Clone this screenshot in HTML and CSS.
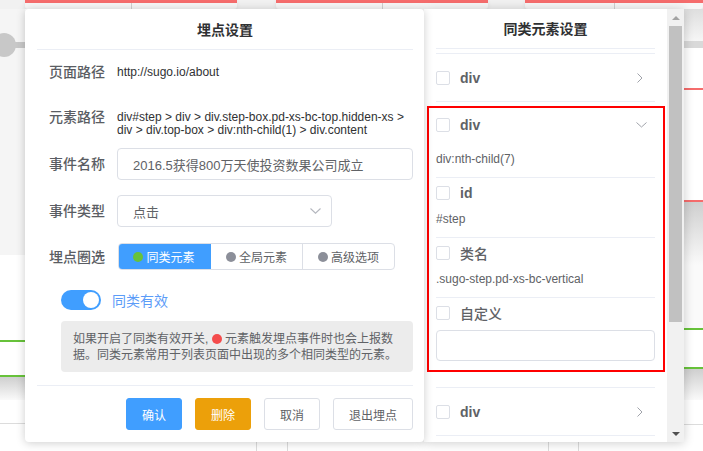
FILE: index.html
```html
<!DOCTYPE html>
<html lang="zh">
<head>
<meta charset="utf-8">
<title>埋点设置</title>
<link rel="stylesheet" href="styles.css">
</head>
<body>
<div class="page">
  <div class="bg">
    <div class="bg-top">
      <div class="card c1"><i class="conn"></i></div>
      <div class="card c2"><i class="conn"></i></div>
      <div class="card c3"><i class="conn"></i></div>
    </div>
    <div class="bg-mid">
      <div class="strip-left">
        <div class="sl-gray"><div class="node"><span class="node-dot"></span><span class="node-line"></span></div></div>
        <div class="sp h85"></div>
        <div class="green"></div>
        <div class="sp h33"></div>
        <div class="green"></div>
        <div class="shade h23"></div>
        <div class="sp h23"></div>
        <div class="gline"></div>
      </div>
      <div class="bg-center"></div>
      <div class="strip-right">
        <div class="shade-top"></div>
        <div class="band"></div>
        <div class="sp h40"></div>
        <div class="red"></div>
        <div class="sp h110"></div>
        <div class="red"></div>
        <div class="shade h63"></div>
        <div class="sp h63 faint"></div>
        <div class="green"></div>
        <div class="sp h37"></div>
        <div class="green"></div>
        <div class="shade h31"></div>
        <div class="sp h24"></div>
        <div class="gline"></div>
      </div>
    </div>
    <div class="bg-bottom">
      <i class="vl v1"></i><i class="vl v2"></i><i class="vl v3"></i><i class="vl v4"></i>
    </div>
  </div>

  <div class="modal">
    <section class="panel-left">
      <div class="panel-title">埋点设置</div>

      <div class="form-row r1">
        <span class="label">页面路径</span>
        <span class="value">http://sugo.io/about</span>
      </div>

      <div class="form-row r2">
        <span class="label">元素路径</span>
        <span class="value path">div#step &gt; div &gt; div.step-box.pd-xs-bc-top.hidden-xs &gt;<br>div &gt; div.top-box &gt; div:nth-child(1) &gt; div.content</span>
      </div>

      <div class="form-row r3">
        <span class="label">事件名称</span>
        <div class="input wide">2016.5获得800万天使投资数果公司成立</div>
      </div>

      <div class="form-row r4">
        <span class="label">事件类型</span>
        <div class="input select">
          <span>点击</span>
          <svg class="sel-arrow" width="11" height="6" viewBox="0 0 11 6"><polyline points="0.5,0.5 5.5,5.2 10.5,0.5" fill="none" stroke="#b4b7be" stroke-width="1.1"/></svg>
        </div>
      </div>

      <div class="form-row r5">
        <span class="label">埋点圈选</span>
        <div class="seg-group">
          <div class="seg active"><i class="dot green-dot"></i>同类元素</div>
          <div class="seg"><i class="dot gray-dot"></i>全局元素</div>
          <div class="seg last"><i class="dot gray-dot"></i>高级选项</div>
        </div>
      </div>

      <div class="switch-row">
        <span class="switch"><span class="knob"></span></span>
        <span class="switch-label">同类有效</span>
      </div>

      <div class="info">如果开启了同类有效开关, <i class="red-dot"></i> 元素触发埋点事件时也会上报数<br>据。同类元素常用于列表页面中出现的多个相同类型的元素。</div>

      <div class="footer">
        <button class="btn primary">确认</button>
        <button class="btn warning">删除</button>
        <button class="btn plain">取消</button>
        <button class="btn plain wide-btn">退出埋点</button>
      </div>
    </section>

    <section class="panel-right">
      <div class="rp-content">
        <div class="rp-title">同类元素设置</div>
        <div class="rp-spacer"></div>
        <div class="item">
          <span class="cb"></span><span class="name">div</span>
          <svg class="chev-r" width="6" height="10" viewBox="0 0 6 10"><polyline points="0.5,0.5 5,5 0.5,9.5" fill="none" stroke="#a0a3aa" stroke-width="1"/></svg>
        </div>

        <div class="hl-box">
          <div class="sec first">
            <div class="sec-head"><span class="cb"></span><span class="name">div</span>
              <svg class="chev-d" width="11" height="6" viewBox="0 0 11 6"><polyline points="0.5,0.5 5.5,5 10.5,0.5" fill="none" stroke="#a0a3aa" stroke-width="1"/></svg>
            </div>
            <div class="sec-val">div:nth-child(7)</div>
          </div>
          <div class="sec">
            <div class="sec-head"><span class="cb"></span><span class="name">id</span></div>
            <div class="sec-val">#step</div>
          </div>
          <div class="sec">
            <div class="sec-head"><span class="cb"></span><span class="name cjk">类名</span></div>
            <div class="sec-val">.sugo-step.pd-xs-bc-vertical</div>
          </div>
          <div class="sec last">
            <div class="sec-head"><span class="cb"></span><span class="name cjk">自定义</span></div>
            <div class="custom-input"></div>
          </div>
        </div>

        <div class="item top-border">
          <span class="cb"></span><span class="name">div</span>
          <svg class="chev-r" width="6" height="10" viewBox="0 0 6 10"><polyline points="0.5,0.5 5,5 0.5,9.5" fill="none" stroke="#a0a3aa" stroke-width="1"/></svg>
        </div>
      </div>
      <div class="scrollbar">
        <div class="sb-btn"><i class="tri-up"></i></div>
        <div class="sb-thumb"></div>
        <div class="sb-track"></div>
        <div class="sb-btn"><i class="tri-down"></i></div>
      </div>
    </section>
  </div>
</div>
</body>
</html>
```

FILE: styles.css
```css
* { box-sizing: border-box; }
html, body { margin: 0; padding: 0; }
body {
  font-family: "Liberation Sans", "Noto Sans CJK SC", sans-serif;
  background: #fff;
  color: #606266;
}
.page {
  position: relative;
  width: 703px;
  height: 451px;
  overflow: hidden;
}

/* ---------- background page ---------- */
.bg { display: flex; flex-direction: column; height: 451px; }
.bg-top {
  height: 9px;
  background: #f1f1f1;
  display: flex;
  padding-left: 25px;
  gap: 39px;
}
.card {
  height: 9px;
  display: flex;
  justify-content: center;
  background: #f7f7f7;
  border-top: 3px solid #f56c6c;
  border-radius: 0 0 3px 3px;
  box-shadow: 0 2px 4px rgba(0,0,0,.08);
}
.c1 { width: 212px; }
.c2 { width: 212px; margin-right: -2px; }
.c3 { flex: 1; }
.card .conn {
  display: block;
  width: 1px;
  height: 6px;
  background: #d0d0d0;
}

.bg-mid { flex: 1; display: flex; }
.strip-left { width: 25px; display: flex; flex-direction: column; }
.strip-right { width: 19px; display: flex; flex-direction: column; }
.bg-center { flex: 1; background: #fff; }
.sl-gray { height: 246px; background: #f5f5f5; padding-top: 24px; }
.node { display: flex; align-items: center; margin-left: -8px; }
.node-dot { width: 24px; height: 24px; border-radius: 50%; background: #c8c8c8; flex: none; }
.node-line { width: 20px; height: 6px; background: #c8c8c8; margin-left: -2px; }
.sp { background: #fff; }
.faint { background: #fafafa; }
.h23 { height: 23px; }
.h24 { height: 24px; }
.h31 { height: 31px; }
.h33 { height: 33px; }
.h37 { height: 37px; }
.h40 { height: 40px; }
.h63 { height: 63px; }
.h85 { height: 85px; }
.h110 { height: 110px; }
.green { height: 2px; background: #67c23a; }
.red { height: 2px; background: #f56c6c; }
.gline { height: 1px; background: #dcdcdc; }
.shade { background: linear-gradient(#cfcfcf, #fafafa); }
.shade-top { height: 32px; background: linear-gradient(#dedede, #f6f6f6); }
.band { height: 7px; background: #d9d9d9; }
.bg-bottom { height: 9px; background: #fff; display: flex; }
.vl { display: block; width: 1px; height: 9px; background: #dcdcdc; }
.v1 { margin-left: 256px; }
.v2 { margin-left: 30px; }
.v3 { margin-left: 260px; }
.v4 { margin-left: 29px; }

/* ---------- modal ---------- */
.modal {
  position: absolute;
  left: 25px;
  top: 9px;
  display: flex;
  height: 433px;
}
.panel-left {
  width: 399px;
  height: 433px;
  background: #fff;
  border-radius: 4px;
  box-shadow: 0 1px 10px rgba(0,0,0,.2);
  padding: 0 11px 0 12px;
  position: relative;
  z-index: 2;
}
.panel-title {
  height: 41px;
  padding-top: 1px;
  line-height: 40px;
  text-align: center;
  font-size: 14px;
  font-weight: bold;
  color: #303133;
  border-bottom: 1px solid #ebeef5;
}
.form-row { display: flex; align-items: center; padding-left: 12px; }
.label {
  width: 68px;
  flex: none;
  font-size: 14px;
  font-weight: 500;
  color: #5a5d63;
  line-height: 16px;
}
.value { font-size: 12px; color: #303133; }
.r1 { height: 43px; }
.r2 { align-items: flex-start; padding-top: 16px; height: 48px; }
.path { line-height: 12.5px; margin-top: 2px; white-space: nowrap; }
.r3 { margin-top: 7px; }
.r4 { margin-top: 15px; }
.r5 { margin-top: 16px; }
.input {
  height: 32px;
  border: 1px solid #dcdfe6;
  border-radius: 4px;
  padding-left: 15px;
  display: flex;
  align-items: center;
  font-size: 13px;
  color: #606266;
}
.wide { width: 296px; }
.select { width: 215px; padding-right: 10px; justify-content: space-between; }

.seg-group {
  display: flex;
  margin-left: 1px;
  height: 27px;
  border: 1px solid #dcdfe6;
  border-radius: 4px;
  overflow: hidden;
}
.seg {
  width: 92px;
  display: flex;
  align-items: center;
  justify-content: center;
  font-size: 12px;
  color: #606266;
  border-right: 1px solid #dcdfe6;
}
.seg.last { width: 91px; border-right: none; }
.seg.active { background: #409eff; color: #fff; border-right-color: #409eff; margin: -1px 0 -1px -1px; width: 93px; }
.dot { display: inline-block; width: 10px; height: 10px; border-radius: 50%; margin-right: 3px; }
.green-dot { background: #67c23a; }
.gray-dot { background: #8c8f99; }

.switch-row {
  margin-top: 20px;
  padding-left: 24px;
  display: flex;
  align-items: center;
  height: 20px;
}
.switch {
  width: 40px;
  height: 20px;
  border-radius: 10px;
  background: #409eff;
  display: flex;
  justify-content: flex-end;
  align-items: center;
  padding-right: 2px;
}
.knob { width: 16px; height: 16px; border-radius: 50%; background: #fff; }
.switch-label { margin-left: 11px; font-size: 14px; color: #5c9cf8; }

.info {
  margin: 11px 0 0 24px;
  height: 51px;
  background: #ececec;
  border-radius: 4px;
  padding: 10px 12px 9px 12px;
  font-size: 12px;
  line-height: 16px;
  color: #606266;
  white-space: nowrap;
}
.red-dot {
  display: inline-block;
  width: 10px;
  height: 10px;
  border-radius: 50%;
  background: #f44c4c;
  vertical-align: -1px;
}

.footer {
  margin-top: 13px;
  border-top: 1px solid #ebeef5;
  padding-top: 12px;
  display: flex;
  justify-content: flex-end;
  gap: 13px;
}
.btn {
  height: 32px;
  width: 56px;
  border-radius: 3px;
  font-family: "Liberation Sans", "Noto Sans CJK SC", sans-serif;
  font-size: 12px;
  border: 1px solid transparent;
  padding: 0;
}
.primary { background: #409eff; color: #fff; border-color: #409eff; }
.warning { background: #eca00a; color: #fff; border-color: #eca00a; }
.plain { background: #fff; color: #606266; border-color: #dcdfe6; }
.wide-btn { width: 80px; }

/* ---------- right panel ---------- */
.panel-right {
  width: 260px;
  height: 433px;
  background: #fff;
  display: flex;
  box-shadow: 0 1px 10px rgba(0,0,0,.2);
  position: relative;
  z-index: 1;
}
.rp-content { width: 243px; padding: 0 12px; }
.rp-title {
  height: 40px;
  line-height: 41px;
  text-align: center;
  font-size: 14px;
  font-weight: bold;
  color: #303133;
  border-bottom: 1px solid #ebeef5;
}
.rp-spacer { height: 5px; border-bottom: 1px solid #ebeef5; }
.item {
  height: 48px;
  display: flex;
  align-items: center;
  border-bottom: 1px solid #ebeef5;
}
.item.top-border { margin-top: 15px; border-top: 1px solid #ebeef5; height: 49px; }
.cb {
  width: 14px;
  height: 14px;
  border: 1px solid #dcdfe6;
  border-radius: 2px;
  flex: none;
  margin-right: 10px;
}
.name { font-size: 14px; font-weight: bold; color: #606266; }
.name.cjk { font-weight: 500; }
.chev-r { margin-left: auto; margin-right: 12px; }
.chev-d { margin-left: auto; margin-right: 8px; }

.hl-box {
  margin: 4px -10px 0 -9px;
  border: 2px solid #f00;
  padding: 0 8px 0 7px;
}
.sec { border-bottom: 1px solid #ebeef5; padding-bottom: 7px; }
.sec.first { padding-top: 2px; }
.sec.first .sec-val { margin-top: 8px; }
.sec.last { border-bottom: none; padding-bottom: 9px; }
.sec-head { height: 30px; display: flex; align-items: center; }
.sec-val { height: 22px; line-height: 22px; font-size: 12px; color: #606266; }
.custom-input {
  margin-top: 2px;
  height: 31px;
  border: 1px solid #dcdfe6;
  border-radius: 4px;
}

.scrollbar {
  width: 17px;
  background: #f1f1f1;
  display: flex;
  flex-direction: column;
}
.sb-btn { height: 17px; display: flex; align-items: center; justify-content: center; }
.sb-thumb { height: 296px; margin: 0 2px; background: #c1c1c1; }
.sb-track { flex: 1; }
.tri-up {
  width: 0; height: 0;
  border-left: 4px solid transparent;
  border-right: 4px solid transparent;
  border-bottom: 4px solid #a3a3a3;
}
.tri-down {
  width: 0; height: 0;
  border-left: 4px solid transparent;
  border-right: 4px solid transparent;
  border-top: 4px solid #505050;
}
```
